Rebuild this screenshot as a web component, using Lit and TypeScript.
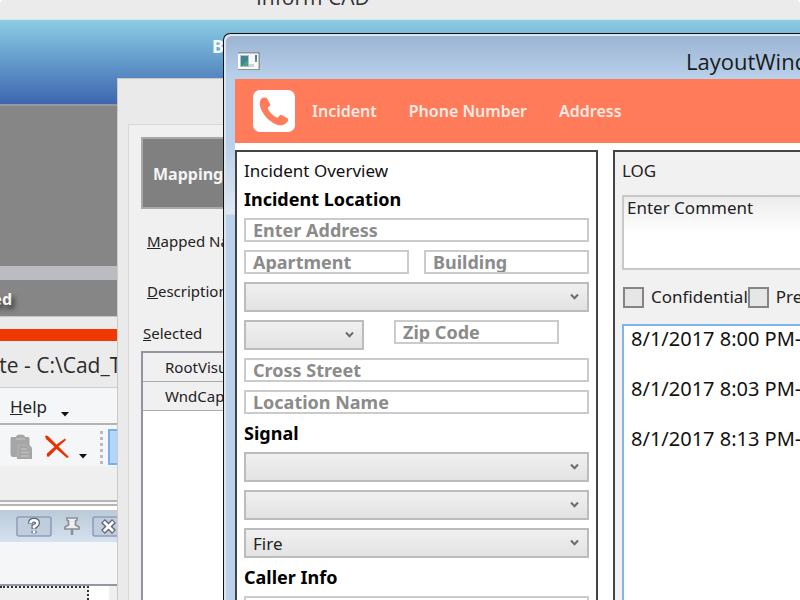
import { LitElement, html, css, svg } from "lit";
import { customElement, property } from "lit/decorators.js";

@customElement("combo-box")
class ComboBox extends LitElement {
  @property() label = "";
  @property() value = "";

  static styles = css`
    :host { display: grid; }
    .box, .chevron { grid-area: 1 / 1; }
    .box {
      appearance: none;
      width: 100%;
      height: 30px;
      padding: 0 24px 0 7px;
      border: 2px solid #bcbcbc;
      border-radius: 0;
      background: linear-gradient(#f0f0f0, #e3e3e3);
      color: #222;
      font: 17px "Noto Sans", sans-serif;
    }
    .chevron {
      align-self: center;
      justify-self: end;
      margin-right: 10px;
      pointer-events: none;
    }
  `;

  render() {
    return html`
      <select class="box" aria-label=${this.label}><option>${this.value}</option></select>
      <svg class="chevron" width="9" height="8" viewBox="0 0 9 8">
        <path d="M1 1.5 L4.5 5.3 L8 1.5" fill="none" stroke="#6c6c6c" stroke-width="2"/>
      </svg>
    `;
  }
}

@customElement("incident-form")
class IncidentForm extends LitElement {
  static styles = css`
    * { box-sizing: border-box; }
    :host { display: block; font: 17px/26px "Noto Sans", sans-serif; color: #111; }
    .title { margin: 0; font-size: 17px; line-height: 26px; font-weight: 400; }
    .heading { margin: 0; font-size: 18px; line-height: 30px; font-weight: 700; color: #000; }
    .fields { display: flex; flex-direction: column; gap: 8px; padding: 4px 0; }
    .row { display: flex; gap: 15px; }
    .short { display: grid; grid-template-columns: 120px 165px; gap: 30px; }
    .field {
      width: 100%;
      min-width: 0;
      height: 24px;
      padding: 0 7px;
      border: 2px solid #cbcbcb;
      background: #fff;
      font: 700 18px/20px "Noto Sans", sans-serif;
    }
    .field::placeholder { color: #8b8b8b; opacity: 1; }
  `;

  private field(label: string) {
    return html`<input class="field" aria-label=${label} placeholder=${label}>`;
  }

  render() {
    return html`
      <h2 class="title">Incident Overview</h2>
      <h3 class="heading">Incident Location</h3>
      <div class="fields">
        ${this.field("Enter Address")}
        <div class="row">${this.field("Apartment")}${this.field("Building")}</div>
        <combo-box label="City"></combo-box>
        <div class="short"><combo-box label="State"></combo-box>${this.field("Zip Code")}</div>
        ${this.field("Cross Street")}
        ${this.field("Location Name")}
      </div>
      <h3 class="heading">Signal</h3>
      <div class="fields">
        <combo-box label="Signal"></combo-box>
        <combo-box label="Priority"></combo-box>
        <combo-box label="Agency" value="Fire"></combo-box>
      </div>
      <h3 class="heading">Caller Info</h3>
      <div class="fields">${this.field("Caller Name")}</div>
    `;
  }
}

@customElement("incident-log")
class IncidentLog extends LitElement {
  static styles = css`
    * { box-sizing: border-box; }
    :host {
      display: flex;
      flex-direction: column;
      font: 17px/26px "Noto Sans", sans-serif;
      color: #222;
      white-space: nowrap;
    }
    .title { margin: 0 0 11px; font-size: 17px; line-height: 26px; font-weight: 400; }
    .comment {
      width: 100%;
      height: 75px;
      padding: 0 3px;
      border: 2px solid #c8c8c8;
      border-right: 0;
      background: linear-gradient(#ececec, #fff 50%);
      font: 17px/22px "Noto Sans", sans-serif;
      resize: none;
    }
    .comment::placeholder { color: #222; opacity: 1; }
    .flags { display: flex; height: 54px; align-items: center; padding-left: 1px; }
    .flag { display: flex; align-items: center; gap: 7px; }
    .tick {
      appearance: none;
      flex: none;
      width: 21px;
      height: 21px;
      margin: 0;
      border: 2px solid #858585;
      background: #e6e6e6;
    }
    .entries {
      flex: 1;
      margin: 0;
      padding: 0 7px;
      border: solid #7fb4ec;
      border-width: 2px 0 0 2px;
      background: #fff;
      list-style: none;
      overflow: hidden;
    }
    .entry { height: 50px; font-size: 20px; line-height: 26px; color: #111; }
  `;

  render() {
    const times = ["8:00", "8:03", "8:13"];
    return html`
      <h2 class="title">LOG</h2>
      <textarea class="comment" aria-label="Comment" placeholder="Enter Comment"></textarea>
      <div class="flags">
        <label class="flag"><input class="tick" type="checkbox">Confidential</label>
        <label class="flag"><input class="tick" type="checkbox">Premise</label>
      </div>
      <ul class="entries">
        ${times.map((t) => html`<li class="entry">8/1/2017 ${t} PM-</li>`)}
      </ul>
    `;
  }
}

@customElement("layout-window")
class LayoutWindow extends LitElement {
  static styles = css`
    * { box-sizing: border-box; }
    :host {
      display: flex;
      flex-direction: column;
      border: solid #111;
      border-width: 1px 0 0 1px;
      border-radius: 7px 0 0 0;
      box-shadow: inset 2px 2px 0 #dde4ec;
      padding: 1px 0 0 11px;
      background: linear-gradient(#9ab3d1, #b8d0ea 44px, #b8d0ea 110px, #dfe9f4 180px, #b9d1ea 181px);
      font-family: "Noto Sans", sans-serif;
      overflow: hidden;
    }
    .bar { display: flex; flex: none; align-items: center; height: 44px; padding: 8px 0 0 2px; }
    .caption {
      margin: 0 0 0 425px;
      color: #1b1b1b;
      font: 22px/30px "Open Sans", sans-serif;
      white-space: nowrap;
    }
    .icon { flex: none; }
    .tabs {
      display: flex;
      flex: none;
      gap: 32px;
      align-items: center;
      height: 64px;
      padding-left: 18px;
      background: #ff7b5a;
    }
    .phone { flex: none; margin-right: -15px; }
    .tab {
      color: #ffebe4;
      font-size: 16px;
      font-weight: 600;
      text-decoration: none;
      white-space: nowrap;
    }
    .body { display: flex; flex: 1; gap: 15px; min-height: 0; padding-top: 7px; background: #fff; }
    .panel { border: 2px solid #444; border-bottom: 0; overflow: hidden; padding: 6px 7px 0; }
    .form { flex: 0 0 363px; background: #fff; }
    .log { display: flex; flex: 1; min-width: 0; border-right: 0; padding-right: 0; background: #f1f1f1; }
    .fill { flex: 1; min-width: 0; }
  `;

  render() {
    return html`
      <header class="bar">
        <svg class="icon" width="24" height="20" viewBox="0 0 24 20">
          <rect x="1" y="1" width="22" height="18" fill="#8e9399"/>
          <rect x="1" y="2.5" width="20.5" height="15.5" fill="#f8f8f8"/>
          <rect x="3" y="4" width="9" height="12" fill="#a9c2cf"/>
          <rect x="4" y="5" width="7" height="10" fill="#3e8590"/>
          <path d="M4 15 L11 9 V15 Z" fill="#4ca17b"/>
          <rect x="18" y="4" width="2" height="4" fill="#4878b4"/>
          <rect x="18" y="8" width="2" height="3" fill="#51a170"/>
          <rect x="12" y="13" width="5" height="3" fill="#d2d2d2"/>
        </svg>
        <h1 class="caption">LayoutWindow</h1>
      </header>
      <nav class="tabs">
        <svg class="phone" width="42" height="42" viewBox="0 0 42 42">
          <rect width="42" height="42" rx="7" fill="#fff"/>
          <path fill="#ff7b5a" d="M8.5 8.5 C10 7 13 7 14.2 8.7 L17 14 C17.5 15 17 16 16 16.5 C14.5 17.4 14.5 18.3 15.5 20 C17.5 23 20 25.5 22.8 27 C24.5 28 25.3 27.5 26.2 26 C27 24.8 28 25 29 25.3 L34 28 C36 29.3 35 31.7 33.2 33 C29.5 36.3 24.5 36 19.5 32.5 C14 29 9 23 7.3 17 C6.4 13.5 6.8 10.5 8.5 8.5 Z"/>
        </svg>
        <a class="tab" href="#incident">Incident</a>
        <a class="tab" href="#phone">Phone Number</a>
        <a class="tab" href="#address">Address</a>
      </nav>
      <main class="body">
        <section class="panel form"><incident-form></incident-form></section>
        <section class="panel log"><incident-log class="fill"></incident-log></section>
      </main>
    `;
  }
}

@customElement("mapping-window")
class MappingWindow extends LitElement {
  static styles = css`
    * { box-sizing: border-box; }
    :host {
      display: flex;
      border: solid #cacaca;
      border-width: 1px 0 0 1px;
      background: #eaeaea;
      padding: 45px 0 0 10px;
      font: 15px/24px "Noto Sans", sans-serif;
      color: #222;
      white-space: nowrap;
    }
    .page {
      display: flex;
      flex: 1;
      flex-direction: column;
      padding: 12px 0 0 12px;
      border: solid #d8d8d8;
      border-width: 1px 0 0 1px;
      background: #f0f0f0;
    }
    .banner {
      flex: none;
      height: 72px;
      margin: 0 0 20px;
      padding-left: 10px;
      border: 2px solid #a9a9a9;
      background: #808080;
      color: #f4f4f4;
      font-size: 16px;
      line-height: 70px;
    }
    .label { height: 24px; margin: 0 0 26px 6px; }
    .selected { height: 24px; margin: -8px 0 6px 2px; }
    .items {
      flex: 1;
      margin: 0;
      padding: 0;
      border: solid #92959c;
      border-width: 2px 0 0 2px;
      background: #fff;
      list-style: none;
    }
    .item { height: 29px; padding-left: 22px; border-bottom: 1px solid #aaa; background: #f0f0f0; line-height: 28px; }
  `;

  render() {
    return html`
      <div class="page">
        <h2 class="banner">Mapping</h2>
        <p class="label"><u>M</u>apped Name</p>
        <p class="label"><u>D</u>escription</p>
        <p class="selected"><u>S</u>elected</p>
        <ul class="items">
          <li class="item">RootVisual</li>
          <li class="item">WndCaption</li>
        </ul>
      </div>
    `;
  }
}

@customElement("app-root")
class AppRoot extends LitElement {
  static styles = css`
    * { box-sizing: border-box; }
    :host {
      display: block;
      position: relative;
      height: 100vh;
      overflow: hidden;
      background: #fff;
      font-family: "Open Sans", sans-serif;
    }
    .desk { display: flex; flex-direction: column; height: 100%; border-radius: 4px 4px 0 0; overflow: hidden; background: #ebebeb; }
    .desk > * { flex: none; }
    .app-title { height: 20px; padding-left: 256px; border-bottom: 1px solid #d8e4e4; overflow: hidden; color: #333; }
    .app-name { margin: -17px 0 0; font-size: 21px; line-height: 28px; font-weight: 400; }
    .sky { height: 84px; padding: 12px 0 0 212px; background: linear-gradient(#8acde4, #3d66b0); color: #f4f8ff; font: 700 18px/28px "Noto Sans", sans-serif; }
    .slate { height: 162px; border-top: 2px solid #9797a3; background: #868686; }
    .rule { height: 14px; background: #bbbcc1; }
    .status { height: 37px; border-bottom: 1px solid #c5c5c5; background: #868686; color: #f4f4f4; font: 700 16px/38px "Noto Sans", sans-serif; text-shadow: 3px 4px 5px #333; }
    .clip { display: flex; justify-content: flex-end; width: 12px; white-space: nowrap; }
    .alert { height: 12px; margin-top: 12px; background: #ef3900; }
    .doc-title { height: 47px; border-bottom: 1px solid #ccc; color: #2c2c2c; font-size: 21px; line-height: 49px; }
    .path { display: flex; justify-content: flex-end; width: 133px; white-space: nowrap; }
    .menu { display: flex; align-items: center; gap: 12px; height: 37px; padding: 2px 0 0 10px; border-bottom: 2px solid #b3b3b3; background: #f5f6f8; }
    .menu-item { padding: 0; border: 0; background: none; color: #222; font: 17px/24px "Noto Sans", sans-serif; }
    .drop { align-self: flex-end; margin: 0 0 6px 2px; }
    .tools { display: flex; align-items: center; height: 41px; padding: 2px 0 0 10px; background: #f5f6f8; }
    .tool { display: flex; padding: 0; border: 0; background: none; }
    .cross { margin: 0 10px 0 12px; }
    .tool-drop { align-self: flex-end; margin: 0 12px 7px 0; }
    .grip { margin-right: 4px; }
    .active { width: 60px; height: 36px; border: 2px solid #78afe9; background: #b3d5fa; }
    .gap { height: 44px; border-bottom: 1px solid #fff; background: linear-gradient(#efefef 34px, #b5b5b5 34px, #b5b5b5 36px, #f8f8f8 36px, #f8f8f8 38px, #b5b5b5 38px, #b5b5b5 40px, #fff 40px); }
    .pane-head { display: flex; align-items: center; gap: 12px; height: 32px; padding-left: 16px; background: linear-gradient(#bacad9, #d5e2ef); }
    .pane-body { height: 44px; border-bottom: 2px solid #9298a3; background: #f5f6f8; }
    .pane-foot { display: flex; flex: 1; background: #fff; }
    .focus { width: 89px; border: dotted #333; border-width: 2px 2px 0 0; background: #efefef; }
    .scroll { width: 20px; margin-left: 20px; background: #efefef; }
    .mapping { position: absolute; left: 117px; top: 78px; right: 0; bottom: 0; }
    .layout { position: absolute; left: 223px; top: 33px; right: 0; bottom: 0; }
  `;

  private drop() {
    return svg`<path d="M0 0 H8 L4 4.5 Z" fill="#111"/>`;
  }

  render() {
    return html`
      <div class="desk">
        <header class="app-title"><h1 class="app-name">Inform CAD</h1></header>
        <div class="sky">B</div>
        <div class="slate"></div>
        <div class="rule"></div>
        <div class="status"><span class="clip">ed</span></div>
        <div class="alert"></div>
        <div class="doc-title"><span class="path">te - C:\\Cad_Te</span></div>
        <div class="menu">
          <button class="menu-item"><u>H</u>elp</button>
          <svg class="drop" width="8" height="5">${this.drop()}</svg>
        </div>
        <div class="tools">
          <button class="tool" aria-label="Paste">
            <svg width="23" height="26" viewBox="0 0 23 26">
              <path d="M1 3 H6 Q6 0.5 10.5 0.5 Q15 0.5 15 3 H18 Q19.5 3 19.5 5 V11 L22 14 V25 H7 V23 H2 L0.5 21 V5 Z" fill="#a6a6a6"/>
              <path d="M6 5 H15 M11 15 H17 M11 18.5 H19 M11 22 H19" stroke="#bdbdbd" stroke-width="1.4"/>
              <path d="M8 23 V11 H16 L20 15" fill="none" stroke="#b4b4b4"/>
            </svg>
          </button>
          <button class="tool cross" aria-label="Delete">
            <svg width="24" height="24" viewBox="0 0 24 24">
              <path d="M0 1 Q2 -0.5 4 2 L11.5 9.5 L20 3.5 L21 5 L13.5 11.5 L24 22 L22 23 L11.5 14 L4 21.5 Q1 22.5 2 18.5 L9.5 11.8 L1 4 Z" fill="#e93205"/>
            </svg>
          </button>
          <svg class="tool-drop" width="8" height="5">${this.drop()}</svg>
          <svg class="grip" width="5" height="34"><path d="M2.5 1 V34" stroke="#bbb" stroke-width="3" stroke-dasharray="3 3"/></svg>
          <button class="tool active" aria-label="Select"></button>
        </div>
        <div class="gap"></div>
        <div class="pane-head">
          <button class="tool" aria-label="Help">
            <svg width="36" height="21" viewBox="0 0 36 21">
              <rect x="1" y="1" width="34" height="19" rx="2" fill="#bfcddd" stroke="#939dbb" stroke-width="1.6"/>
              <path d="M14.5 7.5 V7 Q14.5 4.2 18 4.2 Q21.5 4.2 21.5 7 Q21.5 9 18 10.5 V13 M18 14.8 V17.3" fill="none" stroke="#5d6574" stroke-width="5"/>
              <path d="M14.5 7 Q14.5 4.2 18 4.2 Q21.5 4.2 21.5 7 Q21.5 9 18 10.5 V12.6 M18 14.8 V17" fill="none" stroke="#fff" stroke-width="2.6"/>
            </svg>
          </button>
          <button class="tool" aria-label="Pin">
            <svg width="16" height="19" viewBox="0 0 16 19">
              <path d="M3 1 H13 V3 L11.5 4 V8 L15 10 V12 H1 V10 L4.5 8 V4 L3 3 Z" fill="#eee" stroke="#8b8e92" stroke-width="1.7"/>
              <path d="M8 12 V18" stroke="#8b8e92" stroke-width="2.5"/>
            </svg>
          </button>
          <button class="tool" aria-label="Close">
            <svg width="36" height="21" viewBox="0 0 36 21">
              <rect x="1" y="1" width="34" height="19" rx="2" fill="#bfcddd" stroke="#939dbb" stroke-width="1.6"/>
              <path d="M11 5 L22 16 M22 5 L11 16" stroke="#5d6574" stroke-width="5.5"/>
              <path d="M11.8 5.8 L21.2 15.2 M21.2 5.8 L11.8 15.2" stroke="#fff" stroke-width="2.8"/>
            </svg>
          </button>
        </div>
        <div class="pane-body"></div>
        <div class="pane-foot"><div class="focus"></div><div class="scroll"></div></div>
      </div>
      <mapping-window class="mapping"></mapping-window>
      <layout-window class="layout"></layout-window>
    `;
  }
}
